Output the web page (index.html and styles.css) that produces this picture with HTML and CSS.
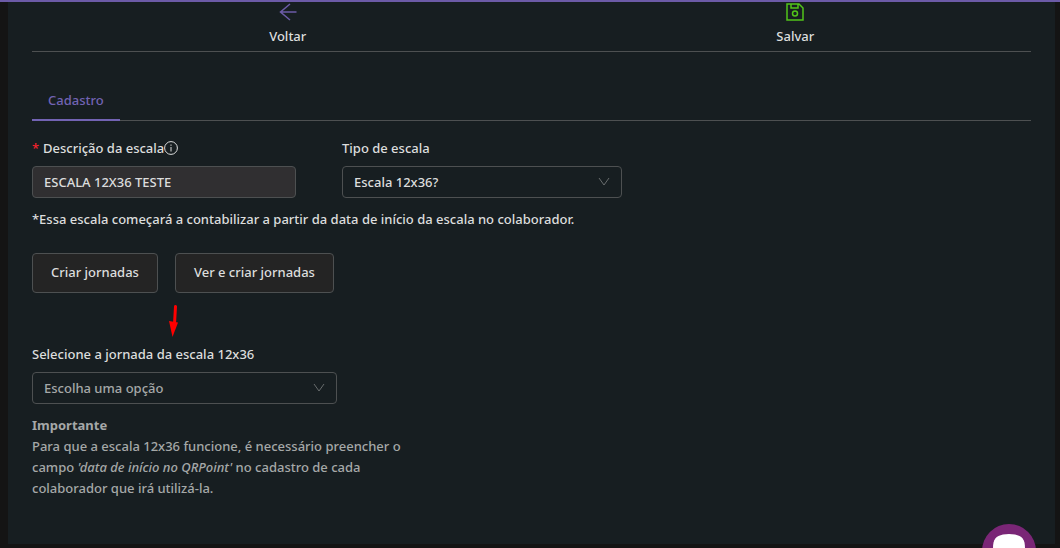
FILE: index.html
```html
<!DOCTYPE html>
<html lang="pt-BR">
<head>
    <meta charset="UTF-8">
    <meta name="viewport" content="width=device-width, initial-scale=1.0">
    <title>Cadastro de escala</title>

    <link rel="stylesheet" href="styles.css">
</head>
<body>
    <main class="card">
        <header class="toolbar">
            <div class="actions">
                <button class="action" type="button">
                    <svg class="icon-back" viewBox="0 0 20 20" aria-hidden="true">
                        <path d="M18.500 10H2.500M12 2L2.500 10l9.500 8"/>
                    </svg>
                    <span>Voltar</span>
                </button>
                <button class="action" type="submit" form="escala">
                    <svg class="icon-save" viewBox="0 0 20 20" aria-hidden="true">
                        <path d="M2 2h12l4 4v12H2zM6 2v4h7V2"/>
                        <circle cx="10" cy="11.500" r="2.500"/>
                    </svg>
                    <span>Salvar</span>
                </button>
            </div>
        </header>

        <nav class="tabs">
            <button class="tab" type="button">Cadastro</button>
        </nav>

        <form id="escala">
            <div class="fields">
                <div class="field descricao">
                    <label for="descricao">
                        <span class="required">*</span>
                        Descrição da escala<svg class="icon-info" viewBox="0 0 14 14" aria-hidden="true">
                            <circle cx="7" cy="7" r="6.400"/>
                            <path d="M7 6v4.500M7 3.500v1.300"/>
                        </svg>
                    </label>
                    <input class="control" id="descricao" type="text" value="ESCALA 12X36 TESTE">
                </div>
                <div class="field tipo">
                    <label for="tipo">Tipo de escala</label>
                    <div class="select">
                        <select class="control" id="tipo">
                            <option>Escala 12x36?</option>
                        </select>
                        <svg class="chevron" viewBox="0 0 12 12" aria-hidden="true"><path d="M1 2l5 7 5-7"/></svg>
                    </div>
                </div>
            </div>
            <p class="note">*Essa escala começará a contabilizar a partir da data de início da escala no colaborador.</p>

            <div class="buttons">
                <button class="btn" type="button">Criar jornadas</button>
                <button class="btn" type="button">Ver e criar jornadas</button>
                <svg class="pointer" viewBox="0 0 12 34" aria-hidden="true">
                    <path class="shaft" d="M6.500 2.500L5.500 20"/>
                    <path class="head" d="M0 17l9 1.500L3.500 33z"/>
                </svg>
            </div>

            <div class="field jornada">
                <label for="jornada">Selecione a jornada da escala 12x36</label>
                <div class="select">
                    <select class="control placeholder" id="jornada">
                        <option>Escolha uma opção</option>
                    </select>
                    <svg class="chevron" viewBox="0 0 12 12" aria-hidden="true"><path d="M1 2l5 7 5-7"/></svg>
                </div>
            </div>
            <div class="help">
                <strong>Importante</strong>
                <p>Para que a escala 12x36 funcione, é necessário preencher o campo <em>'data de início no QRPoint'</em> no cadastro de cada colaborador que irá utilizá-la.</p>
            </div>
        </form>
    </main>

    <button class="chat" type="button" aria-label="Chat">
        <svg viewBox="0 0 54 54" aria-hidden="true">
            <path d="M11 24c0-9 3-12 10-13.500 4-.7 8-.7 12 0C40 12 43 15 43 24v6c0 6-3 10-10 10H21c-7 0-10-4-10-10z"/>
        </svg>
    </button>
</body>
</html>
```
FILE: styles.css
```css
* {
    box-sizing: border-box;
}
body {
    margin: 0;
    padding: 0 5px 4px 8px;
    min-height: 100vh;
    display: flex;
    flex-direction: column;
    border-top: 2px solid #6c5ba7;
    background-color: #141414;
    color: #dcdddd;
    font-family: "Noto Sans", sans-serif;
    font-size: 13px;
    font-weight: 500;
    line-height: 22px;
}
button, input, select {
    font: inherit;
    color: inherit;
}
button {
    cursor: pointer;
}
p {
    margin: 0;
}
svg {
    display: block;
    fill: none;
}
.card {
    flex: 1;
    padding: 0 24px 44px;
    background-color: #171e21;
}

/* top actions */
.toolbar {
    border-bottom: 1px solid #4d5051;
}
.actions {
    display: grid;
    grid-template-columns: 1fr 1fr;
    justify-items: center;
    margin: 0 -18px 0 2px;
    padding-bottom: 4px;
}
.action {
    display: flex;
    flex-direction: column;
    align-items: center;
    gap: 3px;
    padding: 0;
    border: 0;
    background: none;
}
.action svg {
    width: 20px;
    height: 20px;
    stroke-width: 1.5;
}
.icon-back {
    stroke: #6c5ba7;
}
.icon-save {
    stroke: #52c41a;
}

/* tabs */
.tabs {
    display: flex;
    margin-top: 25px;
    border-bottom: 1px solid #4d5051;
}
.tab {
    margin-bottom: -1px;
    padding: 12px 16px 8px;
    border: 0;
    border-bottom: 2px solid #7263b3;
    background: none;
    color: #7263b3;
}

/* form */
.fields {
    display: flex;
    gap: 46px;
    margin-top: 16px;
}
.field {
    display: flex;
    flex-direction: column;
    gap: 7px;
    max-width: 100%;
}
.field label {
    display: flex;
    align-items: center;
}
.descricao {
    width: 264px;
}
.tipo {
    width: 280px;
}
.jornada {
    width: 305px;
    margin-top: 50px;
}
.required {
    width: 11px;
    color: #f5222d;
}
.icon-info {
    width: 14px;
    height: 14px;
    stroke: currentColor;
}
.control {
    display: block;
    width: 100%;
    height: 32px;
    padding: 0 11px;
    border: 1px solid #4d5051;
    border-radius: 4px;
    background-color: transparent;
    appearance: none;
}
input.control {
    background-color: #302f31;
}
.placeholder {
    color: #a5a8a8;
}
.select {
    position: relative;
}
.chevron {
    position: absolute;
    top: 10px;
    right: 12px;
    width: 12px;
    height: 12px;
    stroke: #686c6d;
    pointer-events: none;
}
.note {
    margin-top: 10px;
}
.buttons {
    position: relative;
    display: flex;
    gap: 17px;
    margin-top: 23px;
}
.btn {
    height: 40px;
    padding: 0 18px 2px;
    border: 1px solid #4d5051;
    border-radius: 4px;
    background-color: #242424;
}
/* red arrow over the form */
.pointer {
    position: absolute;
    top: 51px;
    left: 137px;
    width: 12px;
    height: 34px;
}
.shaft {
    stroke: #f00;
    stroke-width: 3;
    stroke-linecap: round;
}
.head {
    fill: #f00;
}
.help {
    max-width: 380px;
    margin-top: 11px;
    color: #a5a8a8;
    line-height: 21px;
}

/* chat bubble */
.chat {
    position: fixed;
    right: 24px;
    bottom: -30px;
    width: 54px;
    height: 54px;
    padding: 0;
    border: 0;
    border-radius: 50%;
    background-color: #7a2676;
}
.chat svg {
    fill: #fff;
}
```
